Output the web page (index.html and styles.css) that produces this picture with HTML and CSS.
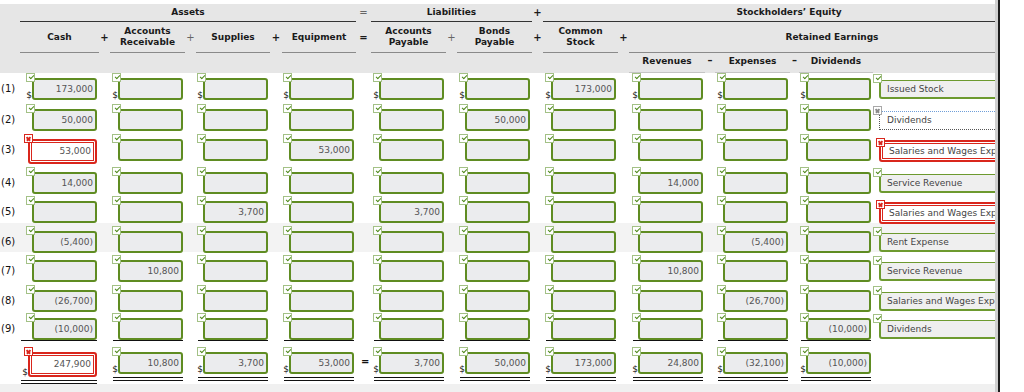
FILE: index.html
```html
<!DOCTYPE html>
<html>
<head>
<meta charset="utf-8">
<link rel="stylesheet" href="styles.css">
</head>
<body>
<div class="page">
  <div class="main">
    <div class="head">
      <div class="hg h1">
        <div></div>
        <div class="grp s7">Assets</div>
        <div class="op lt">=</div>
        <div class="grp s3">Liabilities</div>
        <div class="op">+</div>
        <div class="grp s8">Stockholders’ Equity</div>
      </div>
      <div class="hg h2">
        <div></div>
        <div class="col">Cash</div>
        <div class="op">+</div>
        <div class="col">Accounts<br>Receivable</div>
        <div class="op lt">+</div>
        <div class="col">Supplies</div>
        <div class="op">+</div>
        <div class="col">Equipment</div>
        <div class="op">=</div>
        <div class="col">Accounts<br>Payable</div>
        <div class="op lt">+</div>
        <div class="col">Bonds<br>Payable</div>
        <div class="op">+</div>
        <div class="col">Common<br>Stock</div>
        <div class="op">+</div>
        <div class="col s6">Retained Earnings</div>
      </div>
      <div class="hg h3">
        <div class="s15"></div>
        <div class="sub">Revenues</div>
        <div class="op">–</div>
        <div class="sub">Expenses</div>
        <div class="op">–</div>
        <div class="sub">Dividends</div>
      </div>
    </div>

    <div class="r r1">
      <div class="n">(1)</div>
      <div class="c"><div class="w"><span class="d">$</span><div class="f"><i class="k"></i>173,000</div></div></div>
      <div class="c"><div class="w"><span class="d">$</span><div class="f"><i class="k"></i></div></div></div>
      <div class="c"><div class="w"><span class="d">$</span><div class="f"><i class="k"></i></div></div></div>
      <div class="c"><div class="w"><span class="d">$</span><div class="f"><i class="k"></i></div></div></div>
      <div class="c"><div class="w"><span class="d">$</span><div class="f"><i class="k"></i></div></div></div>
      <div class="c"><div class="w"><span class="d">$</span><div class="f"><i class="k"></i></div></div></div>
      <div class="c"><div class="w"><span class="d">$</span><div class="f"><i class="k"></i>173,000</div></div></div>
      <div class="c"><div class="w"><span class="d">$</span><div class="f"><i class="k"></i></div></div></div>
      <div class="c"><div class="w"><span class="d">$</span><div class="f"><i class="k"></i></div></div></div>
      <div class="c"><div class="w"><span class="d">$</span><div class="f"><i class="k"></i></div></div></div>
      <div class="lc"><div class="lb"><i class="k"></i>Issued Stock</div></div>
    </div>

    <div class="r">
      <div class="n">(2)</div>
      <div class="c"><div class="f"><i class="k"></i>50,000</div></div>
      <div class="c"><div class="f"><i class="k"></i></div></div>
      <div class="c"><div class="f"><i class="k"></i></div></div>
      <div class="c"><div class="f"><i class="k"></i></div></div>
      <div class="c"><div class="f"><i class="k"></i></div></div>
      <div class="c"><div class="f"><i class="k"></i>50,000</div></div>
      <div class="c"><div class="f"><i class="k"></i></div></div>
      <div class="c"><div class="f"><i class="k"></i></div></div>
      <div class="c"><div class="f"><i class="k"></i></div></div>
      <div class="c"><div class="f"><i class="k"></i></div></div>
      <div class="lc"><div class="lb dot"><i class="k g"></i>Dividends</div></div>
    </div>

    <div class="r r3">
      <div class="n">(3)</div>
      <div class="c"><div class="f x"><i class="k x"></i>53,000</div></div>
      <div class="c"><div class="f"><i class="k"></i></div></div>
      <div class="c"><div class="f"><i class="k"></i></div></div>
      <div class="c"><div class="f"><i class="k"></i>53,000</div></div>
      <div class="c"><div class="f"><i class="k"></i></div></div>
      <div class="c"><div class="f"><i class="k"></i></div></div>
      <div class="c"><div class="f"><i class="k"></i></div></div>
      <div class="c"><div class="f"><i class="k"></i></div></div>
      <div class="c"><div class="f"><i class="k"></i></div></div>
      <div class="c"><div class="f"><i class="k"></i></div></div>
      <div class="lc"><div class="lb x"><i class="k x"></i>Salaries and Wages Expense</div></div>
    </div>

    <div class="r r4">
      <div class="n">(4)</div>
      <div class="c"><div class="f"><i class="k"></i>14,000</div></div>
      <div class="c"><div class="f"><i class="k"></i></div></div>
      <div class="c"><div class="f"><i class="k"></i></div></div>
      <div class="c"><div class="f"><i class="k"></i></div></div>
      <div class="c"><div class="f"><i class="k"></i></div></div>
      <div class="c"><div class="f"><i class="k"></i></div></div>
      <div class="c"><div class="f"><i class="k"></i></div></div>
      <div class="c"><div class="f"><i class="k"></i>14,000</div></div>
      <div class="c"><div class="f"><i class="k"></i></div></div>
      <div class="c"><div class="f"><i class="k"></i></div></div>
      <div class="lc"><div class="lb"><i class="k"></i>Service Revenue</div></div>
    </div>

    <div class="r">
      <div class="n">(5)</div>
      <div class="c"><div class="f"><i class="k"></i></div></div>
      <div class="c"><div class="f"><i class="k"></i></div></div>
      <div class="c"><div class="f"><i class="k"></i>3,700</div></div>
      <div class="c"><div class="f"><i class="k"></i></div></div>
      <div class="c"><div class="f"><i class="k"></i>3,700</div></div>
      <div class="c"><div class="f"><i class="k"></i></div></div>
      <div class="c"><div class="f"><i class="k"></i></div></div>
      <div class="c"><div class="f"><i class="k"></i></div></div>
      <div class="c"><div class="f"><i class="k"></i></div></div>
      <div class="c"><div class="f"><i class="k"></i></div></div>
      <div class="lc"><div class="lb x"><i class="k x"></i>Salaries and Wages Expense</div></div>
    </div>

    <div class="r r6 hl">
      <div class="n">(6)</div>
      <div class="c"><div class="f"><i class="k"></i>(5,400)</div></div>
      <div class="c"><div class="f"><i class="k"></i></div></div>
      <div class="c"><div class="f"><i class="k"></i></div></div>
      <div class="c"><div class="f"><i class="k"></i></div></div>
      <div class="c"><div class="f"><i class="k"></i></div></div>
      <div class="c"><div class="f"><i class="k"></i></div></div>
      <div class="c"><div class="f"><i class="k"></i></div></div>
      <div class="c"><div class="f"><i class="k"></i></div></div>
      <div class="c"><div class="f"><i class="k"></i>(5,400)</div></div>
      <div class="c"><div class="f"><i class="k"></i></div></div>
      <div class="lc"><div class="lb"><i class="k"></i>Rent Expense</div></div>
    </div>

    <div class="r">
      <div class="n">(7)</div>
      <div class="c"><div class="f"><i class="k"></i></div></div>
      <div class="c"><div class="f"><i class="k"></i>10,800</div></div>
      <div class="c"><div class="f"><i class="k"></i></div></div>
      <div class="c"><div class="f"><i class="k"></i></div></div>
      <div class="c"><div class="f"><i class="k"></i></div></div>
      <div class="c"><div class="f"><i class="k"></i></div></div>
      <div class="c"><div class="f"><i class="k"></i></div></div>
      <div class="c"><div class="f"><i class="k"></i>10,800</div></div>
      <div class="c"><div class="f"><i class="k"></i></div></div>
      <div class="c"><div class="f"><i class="k"></i></div></div>
      <div class="lc"><div class="lb"><i class="k"></i>Service Revenue</div></div>
    </div>

    <div class="r r8">
      <div class="n">(8)</div>
      <div class="c"><div class="f"><i class="k"></i>(26,700)</div></div>
      <div class="c"><div class="f"><i class="k"></i></div></div>
      <div class="c"><div class="f"><i class="k"></i></div></div>
      <div class="c"><div class="f"><i class="k"></i></div></div>
      <div class="c"><div class="f"><i class="k"></i></div></div>
      <div class="c"><div class="f"><i class="k"></i></div></div>
      <div class="c"><div class="f"><i class="k"></i></div></div>
      <div class="c"><div class="f"><i class="k"></i></div></div>
      <div class="c"><div class="f"><i class="k"></i>(26,700)</div></div>
      <div class="c"><div class="f"><i class="k"></i></div></div>
      <div class="lc"><div class="lb"><i class="k"></i>Salaries and Wages Expense</div></div>
    </div>

    <div class="r r9">
      <div class="n">(9)</div>
      <div class="c"><div class="w wc"><div class="f"><i class="k"></i>(10,000)</div></div></div>
      <div class="c"><div class="w"><div class="f"><i class="k"></i></div></div></div>
      <div class="c"><div class="w"><div class="f"><i class="k"></i></div></div></div>
      <div class="c"><div class="w"><div class="f"><i class="k"></i></div></div></div>
      <div class="c"><div class="w"><div class="f"><i class="k"></i></div></div></div>
      <div class="c"><div class="w"><div class="f"><i class="k"></i></div></div></div>
      <div class="c"><div class="w"><div class="f"><i class="k"></i></div></div></div>
      <div class="c"><div class="w"><div class="f"><i class="k"></i></div></div></div>
      <div class="c"><div class="w"><div class="f"><i class="k"></i></div></div></div>
      <div class="c"><div class="w"><div class="f"><i class="k"></i>(10,000)</div></div></div>
      <div class="lc"><div class="lb"><i class="k"></i>Dividends</div></div>
    </div>

    <div class="r tot">
      <div class="n"></div>
      <div class="c"><div class="w wc"><span class="d">$</span><div class="f x"><i class="k x"></i>247,900</div></div></div>
      <div class="c"><div class="w"><span class="d">$</span><div class="f"><i class="k"></i>10,800</div></div></div>
      <div class="c"><div class="w"><span class="d">$</span><div class="f"><i class="k"></i>3,700</div></div></div>
      <div class="c"><div class="w"><span class="d">$</span><div class="f"><i class="k"></i>53,000</div></div></div>
      <div class="c"><span class="eq">=</span><div class="w"><span class="d">$</span><div class="f"><i class="k"></i>3,700</div></div></div>
      <div class="c"><div class="w"><span class="d">$</span><div class="f"><i class="k"></i>50,000</div></div></div>
      <div class="c"><div class="w"><span class="d">$</span><div class="f"><i class="k"></i>173,000</div></div></div>
      <div class="c"><div class="w"><span class="d">$</span><div class="f"><i class="k"></i>24,800</div></div></div>
      <div class="c"><div class="w"><span class="d">$</span><div class="f"><i class="k"></i>(32,100)</div></div></div>
      <div class="c"><div class="w"><span class="d">$</span><div class="f"><i class="k"></i>(10,000)</div></div></div>
      <div class="lc"></div>
    </div>

    <div class="foot"></div>
  </div>
  <div class="edge"></div>
</div>
</body>
</html>
```

FILE: styles.css
```css
* { box-sizing: border-box; }
html, body { margin: 0; padding: 0; background: #fff; }
body {
  font-family: "DejaVu Sans", Verdana, sans-serif;
  color: #111;
  width: 1024px;
  height: 392px;
  overflow: hidden;
}
.page { display: flex; height: 392px; }
.main { width: 995px; height: 392px; overflow: hidden; padding-top: 4px; }
.edge {
  width: 5px;
  height: 392px;
  border-left: 3px solid #cfcfcf;
  background: #1c1c1c;
}

/* header */
.head { background: #e6e6e6; width: 1035px; }
.hg {
  display: grid;
  grid-template-columns: 20px 79px 11px 75px 11px 74px 12px 74px 15px 75px 11px 75px 11px 75px 11px 76px 10px 75px 9px 74px 162px;
  font-size: 9px;
  font-weight: bold;
  text-align: center;
  color: #1a1a1a;
}
.s3 { grid-column: span 3; }
.s6 { grid-column: span 6; }
.s7 { grid-column: span 7; }
.s8 { grid-column: span 8; }
.s15 { grid-column: span 15; }
.h1 { height: 18px; }
.h1 > div { line-height: 17px; }
.grp { border-bottom: 1px solid #333; }
.h2 { height: 31px; }
.h2 > div {
  display: flex;
  align-items: center;
  justify-content: center;
  line-height: 11px;
}
.col { border-bottom: 1px solid #8a8a8a; }
.h3 { height: 20px; }
.h3 > div { line-height: 16px; }
.sub { border-bottom: 1px solid #c4c4c4; }
.op { font-size: 10px; }
.lt { font-weight: normal; color: #666; }

/* rows */
.r {
  display: grid;
  grid-template-columns: 20px 79px 86px 85px 86px 90px 86px 86px 87px 85px 83px 162px;
  width: 1035px;
  height: 30px;
  padding-top: 3px;
  align-items: start;
}
.r1 { height: 28px; padding-top: 0; }
.r3 { height: 33px; }
.r4, .r6 { height: 29px; }
.r8 { height: 28px; }
.r9 { height: 34px; }
.tot { height: 40px; }
.hl { background: #f3f3f3; }

.n {
  font-size: 10px;
  line-height: 22px;
  padding: 5px 0 0 1px;
  color: #111;
}
.c {
  display: flex;
  justify-content: flex-end;
  align-items: flex-start;
  padding: 5px 2px 0 0;
}
.w {
  display: flex;
  justify-content: flex-end;
  align-items: flex-start;
}
.r9 .w, .tot .w { width: 70px; }
.r9 .wc, .tot .wc { width: 76px; }
.r9 .w { border-bottom: 1px solid #111; }
.tot .w { border-bottom: 4px double #111; padding-bottom: 3px; }
.d {
  align-self: flex-end;
  font-size: 9px;
  line-height: 9px;
  color: #111;
  margin-right: 0;
  margin-left: -2px;
}
.eq {
  margin-right: auto;
  padding-left: 5px;
  margin-top: 4px;
  font-size: 10px;
  font-weight: bold;
}

.f {
  position: relative;
  width: 65px;
  height: 22px;
  border: 2px solid #5f8c22;
  border-radius: 3px;
  background: #ebecee;
  font-size: 9px;
  line-height: 18px;
  color: #555;
  text-align: right;
  padding-right: 2px;
}
.f.x {
  width: 69px;
  height: 25px;
  border: 2px solid #d9261c;
  box-shadow: inset 0 0 0 1px #fff, inset 0 0 0 2px #d9261c;
  background: #fff;
  line-height: 21px;
  padding-right: 4px;
}

/* status badges */
.k {
  position: absolute;
  left: -8px;
  top: -7px;
  width: 9px;
  height: 9px;
  border: 1px solid #a3c186;
  background: #fff;
  z-index: 1;
}
.k::after {
  content: "";
  position: absolute;
  left: 2px;
  top: 1px;
  width: 4px;
  height: 2px;
  border-left: 1px solid #4f8a1c;
  border-bottom: 1px solid #4f8a1c;
  transform: rotate(-45deg);
}
.f.x .k { left: -6px; top: -7px; }
.k.x, .k.g { border-color: #d9261c; }
.k.g { border-color: #a8a8a8; }
.k.x::before, .k.x::after, .k.g::before, .k.g::after {
  content: "";
  position: absolute;
  left: 1px;
  top: 3px;
  width: 5px;
  height: 1.5px;
  border: 0;
  background: #d9261c;
  transform: rotate(45deg);
}
.k.x::after, .k.g::after { transform: rotate(-45deg); }
.k.g::before, .k.g::after { background: #8a8a8a; }

/* account labels */
.lc { padding: 7px 0 0 6px; }
.lb {
  position: relative;
  width: 150px;
  height: 19px;
  border: 1px solid #6d9a2f;
  border-left-width: 2px;
  border-bottom-width: 2px;
  border-radius: 3px;
  background: #efefef;
  font-size: 9px;
  line-height: 16px;
  color: #444;
  padding-left: 6px;
  white-space: nowrap;
}
.lb .k { left: -8px; top: -7px; }
.lb.dot {
  border: 1px dotted #555;
  border-top-color: #6f9ed8;
  border-radius: 0;
  background: #fff;
  padding-left: 7px;
}
.lb.dot .k { left: -7px; top: -6px; }
.lb.x {
  height: 22px;
  margin-top: -1px;
  border: 2px solid #d9261c;
  box-shadow: inset 0 0 0 1px #fff, inset 0 0 0 2px #d9261c;
  background: #fff;
  line-height: 18px;
  padding-left: 8px;
}
.lb.x .k { left: -5px; top: -4px; }

.foot { height: 8px; background: #f0f0f0; width: 1035px; }
```
